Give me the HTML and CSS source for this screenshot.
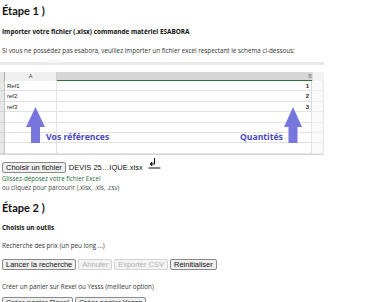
FILE: index.html
```html
<!DOCTYPE html>
<html lang="fr">
<head>
    <meta charset="UTF-8">
    <meta name="viewport" content="width=device-width, initial-scale=1.0">
    <title>Import commande ESABORA</title>
    <link rel="stylesheet" href="styles.css">
</head>
<body>
    <div class="page">
        <h2 class="step">Étape 1 )</h2>
        <p class="label">Importer votre fichier (.xlsx) commande matériel ESABORA</p>
        <p class="hint hint-top">Si vous ne possédez pas esabora, veuillez importer un fichier excel respectant le schema ci-dessous:</p>

        <!-- Schema example (spreadsheet) -->
        <div class="sheet">
            <div class="sheet-top"><span class="tab"></span></div>
            <div class="grid">
                <div class="corner"></div><div class="head head-a">A</div><div class="head head-b">B</div><div class="head head-c"></div>
                <div class="num"></div><div class="cell">Ref1</div><div class="cell right">1</div><div class="cell extra"></div>
                <div class="num"></div><div class="cell">ref2</div><div class="cell right">2</div><div class="cell extra"></div>
                <div class="num"></div><div class="cell">ref3</div><div class="cell right">3</div><div class="cell extra"></div>
                <div class="num"></div><div class="cell"></div><div class="cell"></div><div class="cell extra"></div>
                <div class="num"></div><div class="cell"></div><div class="cell"></div><div class="cell extra"></div>
                <div class="num"></div><div class="cell"></div><div class="cell"></div><div class="cell extra"></div>
                <div class="num"></div><div class="cell"></div><div class="cell"></div><div class="cell extra"></div>
            </div>
            <div class="mark mark-ref">
                <svg class="arrow" width="19" height="36" viewBox="0 0 19 36"><path d="M9.5 0 L19 20 L14 20 L14 36 L5 36 L5 20 L0 20 Z" fill="#7676dc"/></svg>
                <span>Vos références</span>
            </div>
            <div class="mark mark-qty">
                <span>Quantités</span>
                <svg class="arrow" width="18" height="36" viewBox="0 0 18 36"><path d="M9 0 L18 20 L13.5 20 L13.5 36 L4.5 36 L4.5 20 L0 20 Z" fill="#7676dc"/></svg>
            </div>
        </div>

        <div class="file-row">
            <button class="btn">Choisir un fichier</button>
            <span class="file-name">DEVIS 25…IQUE.xlsx</span>
            <svg class="drop-icon" width="13" height="11" viewBox="0 0 13 11"><path d="M6.5 0 V6 M6.5 6 H2.5 M4.3 4.2 L2.5 6 L4.3 7.8 M0.5 10 H12.5" stroke="#111" stroke-width="1.1" fill="none"/></svg>
        </div>
        <p class="drop">Glissez-déposez votre fichier Excel</p>
        <p class="drop-sub">ou cliquez pour parcourir (.xlsx, .xls, .csv)</p>

        <h2 class="step step-2">Étape 2 )</h2>
        <p class="label label-2">Choisis un outils</p>
        <p class="hint">Recherche des prix (un peu long ...)</p>
        <div class="actions">
            <button class="btn">Lancer la recherche</button>
            <button class="btn" disabled>Annuler</button>
            <button class="btn" disabled>Exporter CSV</button>
            <button class="btn">Réinitialiser</button>
        </div>
        <p class="hint hint-cart">Créer un panier sur Rexel ou Yesss (meilleur option)</p>
        <div class="actions actions-cart">
            <button class="btn">Créer panier Rexel</button>
            <button class="btn">Créer panier Yesss</button>
        </div>
    </div>
</body>
</html>
```

FILE: styles.css
```css
body {
    margin: 0;
    padding: 0;
    background: #fff;
    font-family: 'Open Sans', 'DejaVu Sans', sans-serif;
    color: #222;
}
.page {
    padding: 3px 2px 0 2px;
    overflow: hidden;
    height: 302px;
    box-sizing: border-box;
}
p {
    margin: 0;
}
.step {
    margin: 0;
    font-family: 'Lato', 'Open Sans', sans-serif;
    font-size: 11px;
    line-height: 16px;
    font-weight: bold;
    color: #111;
}
.label {
    margin-top: 8px;
    font-size: 6.4px;
    line-height: 10px;
    font-weight: bold;
    color: #111;
}
.hint {
    margin-top: 8px;
    font-size: 6.3px;
    line-height: 10px;
    color: #333;
}
.hint-top {
    margin-top: 9px;
}

/* Spreadsheet picture */
.sheet {
    position: relative;
    margin: 4px 0 0 -2px;
    width: 324px;
    height: 94px;
    border-bottom: 1px solid #d8d8d8;
    font-family: 'Liberation Sans', sans-serif;
}
.sheet-top {
    height: 12px;
    background: linear-gradient(#fff 0, #fff 2px, #e9e9e9 2px, #e9e9e9 5px, #fff 5px);
}
.sheet-top .tab {
    display: block;
    margin-left: 47px;
    width: 16px;
    height: 3px;
    margin-top: 2px;
    background: #f8f8f8;
}
.grid {
    display: grid;
    grid-template-columns: 5px 52px 255px 12px;
    grid-template-rows: 9px repeat(7, 10.4px);
}
.corner {
    background: #e4e4e4;
    border-right: 1px solid #aaa;
}
.head {
    font-size: 5.5px;
    line-height: 9px;
    text-align: center;
    color: #444;
    box-sizing: border-box;
}
.head-a {
    background: #efefef;
    border-right: 1px solid #d0d0d0;
}
.head-b {
    background: #d6d6d6;
    color: #777;
    text-align: right;
    border-bottom: 1px solid #2f6b3a;
}
.head-c {
    background: #f2f2f2;
    border-left: 1px solid #ddd;
}
.num {
    background: #e8e8e8;
    border-bottom: 1px solid #d4d4d4;
    border-right: 1px solid #c4c4c4;
}
.cell {
    font-size: 6px;
    line-height: 10px;
    padding: 0 2px;
    color: #222;
    border-bottom: 1px solid #e2e2e2;
    border-right: 1px solid #e4e4e4;
    box-sizing: border-box;
}
.cell.right {
    text-align: right;
    font-weight: bold;
    border-right: 1px solid #d8d8d8;
}
.cell.extra {
    background: #fafafa;
    border-bottom-color: #efefef;
}
.mark {
    position: absolute;
    top: 47px;
    display: flex;
    align-items: flex-end;
    gap: 1px;
    font-family: 'Open Sans', sans-serif;
    font-weight: bold;
    font-size: 8.6px;
    line-height: 9px;
    color: #4747c2;
}
.mark-ref {
    left: 26px;
}
.mark-qty {
    left: 240px;
}
.mark span {
    margin-bottom: 1px;
}

/* File input */
.file-row {
    display: flex;
    align-items: flex-end;
    gap: 3px;
    margin-top: 3px;
}
.file-name {
    font-family: 'Liberation Sans', sans-serif;
    font-size: 7.5px;
    line-height: 11px;
    color: #111;
}
.drop-icon {
    margin: 0 0 4px 2px;
}
.drop {
    margin-top: 1px;
    font-size: 6.2px;
    line-height: 9px;
    color: #1e6b3c;
}
.drop-sub {
    font-size: 6.2px;
    line-height: 9px;
    color: #444;
}
.step-2 {
    margin-top: 8px;
}
.label-2 {
    margin-top: 7px;
}

/* Buttons */
.btn {
    font-family: 'Liberation Sans', sans-serif;
    font-size: 7.5px;
    line-height: 9px;
    padding: 0 3px;
    background: #efefef;
    border: 1px solid #8a8a8a;
    border-radius: 2px;
    color: #111;
}
.btn:disabled {
    color: #b0b0b0;
    background: #f4f4f4;
    border-color: #d2d2d2;
}
.actions {
    display: flex;
    gap: 2px;
    margin-top: 8px;
}
.hint-cart {
    margin-top: 12px;
}
.actions-cart {
    margin-top: 5px;
}
```
